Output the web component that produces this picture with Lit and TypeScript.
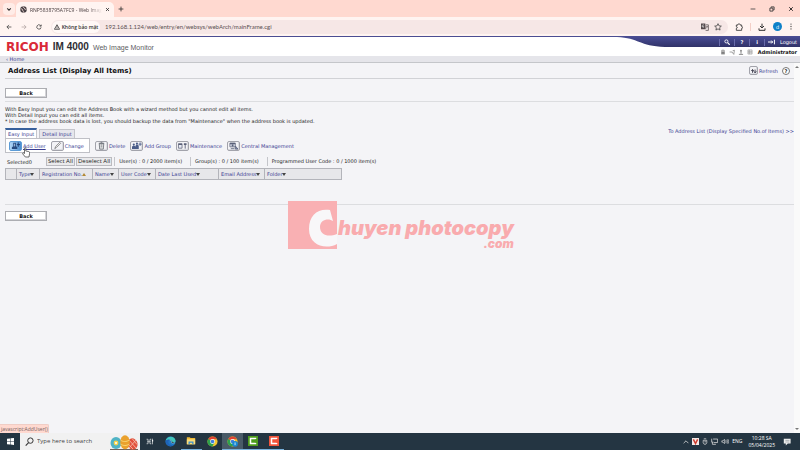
import { LitElement, html, css, svg } from "lit";
import { customElement } from "lit/decorators.js";
import { classMap } from "lit/directives/class-map.js";

const icon = (w: number, h: number, box: string, body: unknown) =>
  html`<svg width=${w} height=${h} viewBox=${box} aria-hidden="true">${body}</svg>`;

const glyph = {
  down: svg`<path d="M2 4l3 3 3-3" fill="none" stroke="#333" stroke-width="1.8"/>`,
  globe: svg`<circle cx="7" cy="7" r="6.5" fill="#484044"/><path d="M1.5 6c3-1 4 1 4 3s2 1 2 4M6 1c0 3 3 2 3 4s2 2 4 1" fill="none" stroke="#ffe9e4" stroke-width="1.7"/>`,
  close: svg`<path d="M2 2l6 6M8 2l-6 6" stroke="#222" stroke-width="1.5"/>`,
  plus: svg`<path d="M5 1v8M1 5h8" stroke="#333" stroke-width="1.4"/>`,
  min: svg`<path d="M1 5h8" stroke="#444" stroke-width="1.4"/>`,
  restore: svg`<path d="M1.5 3.5h5v5h-5zM3.5 3V1.5h5v5H7" fill="none" stroke="#333" stroke-width="1.4"/>`,
  back: svg`<path d="M9 5H1.5M5 1.5L1.5 5 5 8.5" fill="none" stroke="#444" stroke-width="1.3"/>`,
  forward: svg`<path d="M1 5h7.5M5 1.5L8.5 5 5 8.5" fill="none" stroke="#b3a5a4" stroke-width="1.3"/>`,
  reload: svg`<path d="M8.5 5.5A3.6 3.6 0 1 1 7.5 2.4L8.5 3.4M8.7 1v2.6H6" fill="none" stroke="#444" stroke-width="1.3"/>`,
  warn: svg`<path d="M5 1.2L9.3 8.8H.7zM5 4v2.4M5 7.2v.9" fill="none" stroke="#222" stroke-width="1.2"/>`,
  translate: svg`<path d="M0 1h7l1 9H0z" fill="#54494c"/><path d="M2 5.5h3M5 3.5a2 2 0 1 0 0 3" fill="none" stroke="#eee" stroke-width=".9"/><path d="M8 3h4v9H7.5" fill="#f5e9e8" stroke="#54494c" stroke-width="1.2"/><path d="M8.5 6h3M10 5c0 2-1 3-2 4" stroke="#54494c" fill="none"/>`,
  star: svg`<path d="M6 1l1.5 3.3 3.5.4-2.6 2.4.7 3.5L6 8.800l-3.1 1.8.7-3.5L1 4.7l3.5-.4z" fill="none" stroke="#444" stroke-width="1.2"/>`,
  puzzle: svg`<path d="M2 3h2.5c-.5-2.5 3.5-2.5 3 0H10v2.5c2-.5 2 3 0 2.5v3H2V8c2 .2 2-2.5 0-2.5z" fill="none" stroke="#444" stroke-width="1.4"/>`,
  download: svg`<path d="M6 1v6M3 4.5l3 3 3-3M1.5 8v3h9V8" fill="none" stroke="#333" stroke-width="1.5"/>`,
  dots: svg`<circle cx="2" cy="1.5" r=".9" fill="#444"/><circle cx="2" cy="5" r=".9" fill="#444"/><circle cx="2" cy="8.500" r=".9" fill="#444"/>`,
  search: svg`<circle cx="4" cy="4" r="2.6" fill="none" stroke="#fff" stroke-width="1.5"/><path d="M6 6l3.5 3.5" stroke="#fff" stroke-width="2"/>`,
  logout: svg`<path d="M0 5h8M5.5 2.5L8 5 5.5 7.5M11 1v8" fill="none" stroke="#fff" stroke-width="1.7"/>`,
  lock: svg`<path d="M2 4h6v5H2z" fill="#888"/><path d="M3 4V2h4v2M4 6h2" fill="none" stroke="#777" stroke-width="1.2"/>`,
  net: svg`<path d="M1 5h4l3 4 1-7-3 1" fill="none" stroke="#888" stroke-width="1.3"/>`,
  person: svg`<circle cx="5" cy="3" r="1.6" fill="#888"/><path d="M5 4v4M1.5 9h7" stroke="#888" stroke-width="1.6"/>`,
  list: svg`<path d="M1.5 1.5h7v7h-7zM1.5 4h7M1.5 6.3h7M4 1.5v7" fill="#eee" stroke="#999"/>`,
  refresh: svg`<path d="M3.5 8V3.5L1.8 5.5M3.5 3.5L5.2 5.5M7 3.5V8L5.3 6M7 8l1.7-2" fill="none" stroke="#334" stroke-width="1.2"/>`,
  user: svg`<path d="M2 9V7l2-1.500h2.500L8 7v2z" fill="#274a80"/><path d="M3.500 2h3v3.500h-3z" fill="#274a80"/><path d="M5 3v3" stroke="#d5e8fa" stroke-width=".8"/><path d="M9 1.500v5M7.500 4h3.500" stroke="#1e3c70" stroke-width="1.100"/>`,
  pencil: svg`<path d="M3 8.5L4 6l4.5-4.5 1 1L5 7z" fill="#fff" stroke="#666" stroke-width=".8"/>`,
  trash: svg`<path d="M3.5 3h5L8 9H4zM3 2.5h6M5 1.500h2M5 4.500h2M5 6.500h2" fill="#eee" stroke="#666a72" stroke-width=".9"/>`,
  group: svg`<path d="M1 9V6l2-1 2 1V5l1.500-1L8.500 5v4z" fill="#4a5c88"/><circle cx="3" cy="4" r="1.200" fill="#4a5c88"/><circle cx="6.500" cy="3" r="1.200" fill="#4a5c88"/><path d="M10 1.500v4M8.200 3.500h3.600" stroke="#50618c"/>`,
  maint: svg`<path d="M1.5 3h4v5h-4z" fill="#e7ebf4" stroke="#656b80" stroke-width=".9"/><path d="M1.5 3h4v1.500h-4zM7.500 2.500h3v2h-3z" fill="#5a6078"/><path d="M9 4v4.500" stroke="#5a6078"/>`,
  central: svg`<path d="M2 2.500h6v4H2z" fill="#dfe4f0" stroke="#656b80" stroke-width=".9"/><path d="M2 2h6v1.500H2zM4 4h2v2H4z" fill="#5a6078"/><path d="M3 8.500h4M8 5.500l3 3.500H8z" fill="#8491b5" stroke="#5a6078" stroke-width=".9"/>`,
};

const start = svg`<path d="M0 1.2L4.5.6v4H0zM5.2.5L10 0v4.6H5.2zM0 5.3h4.5v4L0 8.8zM5.2 5.3H10V10l-4.8-.6z" fill="#fff"/>`;
const magnifier = svg`<circle cx="6" cy="4" r="3" fill="none" stroke="#333" stroke-width="1.1"/><path d="M4 6.300L.8 9.500" stroke="#333" stroke-width="1.2"/>`;
const eggs = svg`<path d="M0 14h28v1H0z" fill="#6d6259"/><ellipse cx="6" cy="8" rx="5.5" ry="6" fill="#4fb3c5"/><circle cx="6" cy="8" r="2.4" fill="#f6d24b"/><circle cx="6" cy="8" r="1" fill="#fff"/><ellipse cx="22.5" cy="9" rx="5" ry="5.7" fill="#e2523d" transform="rotate(-15 22.5 9)"/><path d="M19 5l7 8M22 3.5l5 6M18 9l5 5M26 5l-7 8" stroke="#f6c0ad" stroke-width=".8"/><ellipse cx="15" cy="7.2" rx="4.7" ry="7" fill="#eaa12d"/><path d="M10.600 5c2 2 6 2 8.700 0M10.400 9c3 2 6 2 9 0" fill="none" stroke="#f9d675"/>`;
const taskview = svg`<path d="M1 1v2h5V1M1 9V7h5v2M1 5h5M8.5 1v8" fill="none" stroke="#d8dde0" stroke-width="1.1"/><path d="M8 3h1.5v2H8z" fill="#fff"/>`;
const edge = svg`<circle cx="6" cy="6" r="5.5" fill="#1d78c9"/><path d="M.7 5C2-.5 11-.7 11.5 5.200c0 3-4 2.800-4.500 1.800C8.500 4 4 2.500.7 5z" fill="#43c6bb"/><path d="M5.200 4.500C2 6 4 10.500 9 10 5 13 .8 9.500.8 6c0-1 2-2.500 4.400-1.500z" fill="#1f63b8"/><path d="M5.200 4.700c2-.3 2 1.500 1.600 2.300.8 1 2.500 1 3.700.6" fill="#26343f" stroke="#bfeaf5" stroke-width=".5"/>`;
const folder = svg`<path d="M1 1.5h3.5l1 1H11V10H1z" fill="#efb936"/><path d="M1 4h10v6H1z" fill="#fbdc79"/><path d="M3 10V6.5h6V10H7.5V8h-3v2z" fill="#3a8fd0"/>`;
const chrome = svg`<circle cx="6" cy="6" r="5.5" fill="#f4c52f"/><path d="M6 6L1.2 3.2A5.5 5.5 0 0 1 10.9 3.5H6z" fill="#df4334"/><path d="M6 6L1.2 3.2A5.5 5.5 0 0 0 5.8 11.5L8.2 7z" fill="#2da14d"/><circle cx="6" cy="6" r="2.6" fill="#fff"/><circle cx="6" cy="6" r="2" fill="#3d7de0"/>`;
const chromeBadge = svg`${chrome}<circle cx="8.800" cy="8.500" r="3.100" fill="#1987d2"/><path d="M8.800 7v3" stroke="#cfe9fb"/>`;
const camtasia = (c: string) => svg`<path d="M0 0h12v12H0z" fill=${c}/><path d="M9 3.500V3H3v6h6v-.5" fill="none" stroke="#fff" stroke-width="1.800"/>`;

@customElement("app-root")
export class AppRoot extends LitElement {
  static styles = css`
    * { box-sizing: border-box; }
    :host {
      display: flex; flex-direction: column; height: 100vh; overflow: hidden; position: relative;
      background: #f4f4f7; color: #222; font: 5px/6px "DejaVu Sans", Verdana, sans-serif;
    }
    svg { display: block; flex: none; }
    button { border: 0; background: none; padding: 0; margin: 0; font: inherit; color: inherit; display: flex; align-items: center; justify-content: center; white-space: nowrap; }
    a { color: #3a3d92; text-decoration: none; }
    h1, p { margin: 0; font-weight: normal; }

    .tabs { display: flex; align-items: center; height: 17px; background: #ffd9d0; padding: 0 6px 0 3px; flex: none; }
    .pick { width: 12px; height: 12px; border-radius: 4px; background: #ffece7; }
    .tab { display: flex; align-items: center; gap: 3px; width: 98px; height: 15px; margin: 2px 4px 0 1px; padding: 0 4px; background: #fff4f1; border-radius: 5px 5px 0 0; }
    .tab-name { flex: 1; white-space: nowrap; color: #43383a; font: 5px/8px "Open Sans", sans-serif; -webkit-mask-image: linear-gradient(90deg, #000 80%, transparent); }
    .grow { flex: 1; }
    .window { display: flex; gap: 13px; }

    .bar { display: flex; align-items: center; height: 19px; background: #fff4f1; padding: 0 7px 0 6px; flex: none; }
    .nav { display: flex; gap: 9px; margin-right: 9px; }
    .nav button { width: 6px; }
    .address { flex: 1; min-width: 0; display: flex; align-items: center; gap: 5px; height: 14px; padding: 0 6px 0 1px; border-radius: 7px; background: #f6e7e6; font: 6px/8px Lato, sans-serif; }
    .chip { height: 12px; gap: 2px; border-radius: 6px; background: #fff8f6; font: 600 5px/8px "Open Sans", sans-serif; color: #333; width: 48px; }
    .url { flex: 1; min-width: 0; border: 0; background: none; padding: 0; font: inherit; color: #5a4f51; outline: 0; }
    .extras { display: flex; align-items: center; gap: 7px; margin-left: 7px; }
    .sep { width: 1px; height: 8px; background: #f3cfc7; }
    .avatar { width: 9px; height: 9px; border-radius: 50%; background: #0e81c8; color: #fff; font-size: 5px; }

    .brand { display: flex; height: 20px; background: #fff; border-top: 1px solid #4b4d92; flex: none; }
    .logo { padding: 3px 0 0 6px; display: flex; gap: 4px; align-items: center; height: 17px; white-space: nowrap; }
    .ricoh { font: bold 12px/12px "DejaVu Sans", sans-serif; color: #d92a38; }
    .model { font: bold 10px/12px "Liberation Sans", sans-serif; color: #2d2d33; }
    .wim { font: 7px/12px "Liberation Sans", sans-serif; color: #5c5c62; padding-top: 2px; }
    .top-right { margin-left: auto; display: flex; flex-direction: column; }
    .navy { display: flex; height: 10px; }
    .links { display: flex; align-items: center; background: linear-gradient(#484b92, #303268); }
    .links > * { height: 7px; border-left: 1px solid #696caa; color: #fff; display: flex; align-items: center; justify-content: center; width: 15px; }
    .links .out { width: 36px; gap: 5px; font-size: 5px; }
    .states { display: flex; justify-content: flex-end; gap: 3px; align-items: center; height: 9px; padding-right: 3px; }
    .states b { margin-left: 2px; color: #111; }

    .crumb { height: 7px; background: #e5e5ea; border-bottom: 1px solid #c4c6ca; padding-left: 6px; line-height: 6px; flex: none; }
    .body { flex: 1; min-height: 0; display: flex; }
    .page { flex: 1; min-width: 0; padding-left: 5px; }
    .title { display: flex; align-items: center; height: 16px; border-bottom: 1px solid #d1d2d6; padding: 0 4px 0 3px; }
    .title h1 { font: bold 7px/8px "DejaVu Sans", sans-serif; color: #111; flex: 1; }
    .refresh { display: flex; align-items: center; margin-right: 4px; gap: 1px; }
    .key { display: flex; align-items: center; justify-content: center; width: 13px; height: 10px; border: 1px solid #a2a3ab; border-radius: 2px; background: #f3f3f6; box-shadow: inset -1px -1px #dcdde2; }
    .key.small { width: 9px; height: 9px; }
    .key.hot { background: linear-gradient(90deg, #b2d6f7, #4a8dcf); border-color: #5c9bd6; box-shadow: none; }
    .help { width: 8px; height: 8px; border: 1px solid #777; border-radius: 50%; background: #fff; font-weight: bold; }
    .back-row { height: 23px; padding-top: 9px; border-bottom: 1px solid #dcdde0; }
    .back { width: 42px; height: 10px; background: #fff; border: 1px solid #acadb2; box-shadow: inset -1px -1px #d4d4d8; font-weight: bold; color: #111; }
    .intro { padding-top: 4px; height: 26px; white-space: nowrap; }
    .input-tabs { display: flex; gap: 2px; height: 11px; align-items: flex-end; }
    .input-tab { height: 10px; padding: 0 2px; border: 1px solid #c4c5cb; background: #e6e6ec; color: #3a3d92; }
    .input-tab.on { height: 11px; background: #fff; border-top: 2px solid #37609c; border-bottom: 0; padding-bottom: 1px; }
    .all { margin-left: auto; align-self: flex-start; white-space: nowrap; }
    .tools { display: flex; align-items: center; height: 15px; margin-top: -1px; gap: 5px; white-space: nowrap; }
    .boxed { display: flex; gap: 5px; align-items: center; height: 15px; width: 85px; padding: 0 3px; border: 1px solid #bfc0c6; background: #fff; }
    .tool { display: flex; align-items: center; gap: 1px; }
    .tool.hot { text-decoration: underline; }
    .counts { display: flex; align-items: center; height: 15px; white-space: nowrap; padding: 2px 0 0 2px; }
    .selected { width: 39px; }
    .select { height: 9px; padding: 0 1px; margin-right: 1px; border: 1px solid #bbbbc0; background: #eaeaec; color: #222; font: 6px/7px "Open Sans", sans-serif; }
    .count { border-left: 1px solid #c4c5ca; padding: 0 7px 0 4px; margin-left: 1px; line-height: 9px; }
    table { border-collapse: collapse; table-layout: fixed; width: 336px; }
    th { height: 11px; padding: 0 0 0 2px; border: 1px solid #b3b4ba; background: #e7e7ea; font-weight: normal; text-align: left; white-space: nowrap; line-height: 9px; }
    .c0 { width: 11px; } .c1 { width: 23px; } .c2 { width: 53px; } .c3 { width: 26px; } .c4 { width: 37px; } .c5 { width: 63px; } .c6 { width: 46px; } .c7 { width: 77px; }
    .sort { display: inline-block; border: 2px solid transparent; border-top: 3px solid #444; border-bottom: 0; }
    .sort.up { border-top: 0; border-bottom: 3px solid #b38a35; }
    .foot { margin-top: 24px; border-top: 1px solid #dcdde0; padding-top: 6px; }
    .scroll { width: 6px; background: #fafafa; display: flex; flex-direction: column; justify-content: space-between; align-items: center; padding: 3px 0; }
    .arrow { border: 2px solid transparent; border-bottom: 2px solid #777; border-top: 0; }
    .arrow.dn { border-top: 2px solid #777; border-bottom: 0; }

    .mark { position: absolute; left: 288px; top: 201px; width: 49px; height: 48px; background: #f9b0b3; }
    .mark-name { position: absolute; left: 50px; top: 17px; white-space: nowrap; color: #f9abae; font: italic 900 20px/20px Inter, sans-serif; display: flex; flex-direction: column; align-items: flex-end; }
    .mark-com { font-size: 12px; line-height: 12px; }
    .hand { position: absolute; left: 22px; top: 147px; }
    .status { position: absolute; left: 0; bottom: 17px; height: 9px; width: 49px; padding-left: 1px; border-radius: 0 2px 0 0; background: #ffd9d0; color: #76605d; font: 5px/8px "Open Sans", sans-serif; border: 1px solid #f0cdc5; border-width: 1px 1px 0 0; }

    .task { display: flex; height: 17px; background: #243542; flex: none; align-items: stretch; color: #fff; font: 5px/7px "Open Sans", sans-serif; }
    .start { width: 20px; }
    .find { width: 120px; display: flex; align-items: center; background: #f1f1f1; padding: 0 2px 0 5px; gap: 3px; }
    .find input { flex: 1; min-width: 0; border: 0; background: none; outline: 0; padding: 0; font: 6px/9px "Open Sans", sans-serif; }
    .find input::placeholder { color: #444; opacity: 1; }
    .find svg.eggs { align-self: flex-end; }
    .apps { display: flex; width: 144px; }
    .app { flex: 1; border-bottom: 1px solid transparent; }
    .app.open { border-bottom-color: #78b1dc; }
    .app.active { background: #495a67; }
    .tray { margin-left: auto; display: flex; align-items: center; gap: 3px; padding-right: 9px; }
    .clock { text-align: center; white-space: nowrap; margin: 0 5px 0 3px; }
  `;

  private tool(label: string, body: unknown, hot = false) {
    return html`<a href="#" class=${classMap({ tool: true, hot })}>
      <span class=${classMap({ key: true, hot })}>${icon(11, 9, "0 0 12 10", body)}</span>${label}</a>`;
  }

  render() {
    const g = glyph;
    const columns = ["", "Type", "Registration No.", "Name", "User Code", "Date Last Used", "Email Address", "Folder"];
    return html`
      <div class="tabs">
        <button class="pick" aria-label="Search tabs">${icon(6, 6, "0 0 10 10", g.down)}</button>
        <div class="tab">${icon(7, 7, "0 0 14 14", g.globe)}<span class="tab-name">RNP5838795A7FC9 - Web Imag</span>
          <button aria-label="Close tab">${icon(5, 5, "0 0 10 10", g.close)}</button></div>
        <button aria-label="New tab">${icon(6, 6, "0 0 10 10", g.plus)}</button>
        <span class="grow"></span>
        <div class="window">
          <button aria-label="Minimize">${icon(6, 6, "0 0 10 10", g.min)}</button>
          <button aria-label="Restore">${icon(6, 6, "0 0 10 10", g.restore)}</button>
          <button aria-label="Close">${icon(6, 6, "0 0 10 10", g.close)}</button>
        </div>
      </div>
      <div class="bar">
        <div class="nav">
          <button aria-label="Back">${icon(6, 6, "0 0 10 10", g.back)}</button>
          <button aria-label="Forward">${icon(6, 6, "0 0 10 10", g.forward)}</button>
          <button aria-label="Reload">${icon(6, 6, "0 0 10 10", g.reload)}</button>
        </div>
        <div class="address">
          <button class="chip">${icon(6, 6, "0 0 10 10", g.warn)}Không bảo mật</button>
          <input class="url" aria-label="Address" value="192.168.1.124/web/entry/en/websys/webArch/mainFrame.cgi" />
          <button aria-label="Translate">${icon(8, 8, "0 0 13 13", g.translate)}</button>
          <button aria-label="Bookmark">${icon(8, 8, "0 0 12 12", g.star)}</button>
        </div>
        <div class="extras">
          <button aria-label="Extensions">${icon(8, 8, "0 0 12 12", g.puzzle)}</button>
          <span class="sep"></span>
          <button aria-label="Downloads">${icon(8, 8, "0 0 12 12", g.download)}</button>
          <button class="avatar" aria-label="Profile">d</button>
          <button aria-label="Menu">${icon(4, 7, "0 0 4 10", g.dots)}</button>
        </div>
      </div>

      <header class="brand">
        <div class="logo"><span class="ricoh">RICOH</span><span class="model">IM 4000</span><span class="wim">Web Image Monitor</span></div>
        <div class="top-right">
          <div class="navy">
            <svg width="102" height="10" viewBox="0 0 102 10" aria-hidden="true">
              <defs><linearGradient id="n" x2="0" y2="1"><stop stop-color="#484b92"/><stop offset="1" stop-color="#303268"/></linearGradient></defs>
              <path d="M0 0h102v10H48C22 9 22 1 0 0z" fill="url(#n)"/></svg>
            <nav class="links">
              <a href="#" aria-label="Search">${icon(6, 6, "0 0 10 10", g.search)}</a>
              <a href="#"><b>?</b></a><a href="#"><b>i</b></a>
              <a href="#" class="out">${icon(7, 6, "0 0 12 10", g.logout)}Logout</a>
            </nav>
          </div>
          <div class="states">
            ${[g.lock, g.net, g.person, g.list].map((b) => icon(6, 6, "0 0 10 10", b))}<b>Administrator</b>
          </div>
        </div>
      </header>
      <nav class="crumb"><a href="#">‹ Home</a></nav>

      <div class="body">
        <main class="page">
          <div class="title"><h1>Address List (Display All Items)</h1>
            <a href="#" class="refresh"><span class="key small">${icon(8, 8, "0 0 11 11", g.refresh)}</span>Refresh</a>
            <button class="help" aria-label="Help">?</button></div>
          <div class="back-row"><button class="back">Back</button></div>
          <div class="intro">
            <p>With Easy Input you can edit the Address Book with a wizard method but you cannot edit all items.</p>
            <p>With Detail Input you can edit all items.</p>
            <p>* In case the address book data is lost, you should backup the data from "Maintenance" when the address book is updated.</p>
          </div>
          <div class="input-tabs"><button class="input-tab on">Easy Input</button><button class="input-tab">Detail Input</button>
            <a href="#" class="all">To Address List (Display Specified No.of Items) &gt;&gt;</a></div>
          <div class="tools">
            <div class="boxed">${this.tool("Add User", g.user, true)}${this.tool("Change", g.pencil)}</div>
            ${this.tool("Delete", g.trash)}${this.tool("Add Group", g.group)}${this.tool("Maintenance", g.maint)}${this.tool("Central Management", g.central)}
          </div>
          <div class="counts">
            <span class="selected">Selected0</span>
            <button class="select">Select All</button><button class="select">Deselect All</button>
            <span class="count">User(s) : 0 / 2000 item(s)</span>
            <span class="count">Group(s) : 0 / 100 item(s)</span>
            <span class="count">Programmed User Code : 0 / 1000 item(s)</span>
          </div>
          <table><colgroup>${columns.map((_, i) => html`<col class="c${i}" />`)}</colgroup>
            <thead><tr>${columns.map((c, i) => html`<th>${c ? html`<a href="#">${c}<span class=${classMap({ sort: true, up: i === 2 })}></span></a>` : ""}</th>`)}</tr></thead>
          </table>
          <div class="foot"><button class="back">Back</button></div>
        </main>
        <div class="scroll"><span class="arrow"></span><span class="arrow dn"></span></div>
      </div>

      <div class="mark">
        <svg width="49" height="48" viewBox="0 0 49 48" aria-hidden="true"><path d="M42 9l3 11c-4-3-13-2-13 6 0 7 7 11 17 7v10c-11 6-28 2-28-15C21 14 30 7 42 9z" fill="#f8f7f9"/></svg>
        <div class="mark-name"><span>huyen photocopy</span><span class="mark-com">.com</span></div>
      </div>
      <svg class="hand" width="8" height="11" viewBox="0 0 8 11" aria-hidden="true"><path d="M2.5 6.5V1.2c0-1 1.3-1 1.3 0V4l3 .6c.8.2 1 .7.9 1.500L7 10H3.300L.7 6.800c-.4-.8.6-1.200 1.100-.7z" fill="#fff" stroke="#333" stroke-width=".7"/></svg>
      <div class="status">javascript:AddUser()</div>

      <footer class="task">
        <button class="start" aria-label="Start">${icon(7, 7, "0 0 10 10", start)}</button>
        <label class="find">${icon(9, 9, "0 0 10 10", magnifier)}<input aria-label="Search" placeholder="Type here to search" />
          <svg class="eggs" width="28" height="15" viewBox="0 0 28 15" aria-hidden="true">${eggs}</svg></label>
        <div class="apps">
          <button class="app" aria-label="Task view">${icon(8, 7, "0 0 10 10", taskview)}</button>
          <button class="app" aria-label="Edge">${icon(11, 11, "0 0 12 12", edge)}</button>
          <button class="app open" aria-label="Files">${icon(10, 10, "0 0 12 12", folder)}</button>
          <button class="app" aria-label="Chrome">${icon(11, 11, "0 0 12 12", chrome)}</button>
          <button class="app open active" aria-label="Chrome profile">${icon(11, 11, "0 0 12 12", chromeBadge)}</button>
          <button class="app open" aria-label="Camtasia">${icon(10, 10, "0 0 12 12", camtasia("#4d9c1d"))}</button>
          <button class="app open" aria-label="Recorder">${icon(10, 10, "0 0 12 12", camtasia("#f0543c"))}</button>
        </div>
        <div class="tray">
          ${icon(6, 6, "0 0 10 10", svg`<path d="M1 7l4-4 4 4" fill="none" stroke="#ddd" stroke-width="1.3"/>`)}
          ${icon(7, 7, "0 0 10 10", svg`<path d="M0 0h10v10H0z" fill="#f5e9e6"/><path d="M2 2l3 6 3-6" fill="none" stroke="#d03a2c" stroke-width="2"/>`)}
          ${icon(6, 7, "0 0 10 11", svg`<path d="M3 1h4M2 3.5h6v4L6.5 10h-3L2 7.5zM4 6h3" fill="none" stroke="#ddd" stroke-width="1.2"/>`)}
          ${icon(7, 7, "0 0 10 10", svg`<path d="M3 1.5h6.5v5H4M1 1v5h2.5M2 6v3h5" fill="none" stroke="#ddd" stroke-width="1.1"/>`)}
          ${icon(8, 7, "0 0 11 10", svg`<path d="M1 4h1.5L5 2v6L2.5 6H1zM6.5 3.5q1 1.5 0 3M8 2.5q2 2.5 0 5M9.5 1.5q2.5 3.5 0 7" fill="none" stroke="#ddd"/>`)}
          <span>ENG</span>
          <div class="clock"><div>10:28 SA</div><div>05/04/2025</div></div>
          ${icon(8, 8, "0 0 10 10", svg`<path d="M1 1h8.5v6H6L3.5 9.5V7H1z" fill="#eee"/><path d="M3 3h5M3 5h5" stroke="#8a9299" stroke-width=".8"/>`)}
        </div>
      </footer>
    `;
  }
}
